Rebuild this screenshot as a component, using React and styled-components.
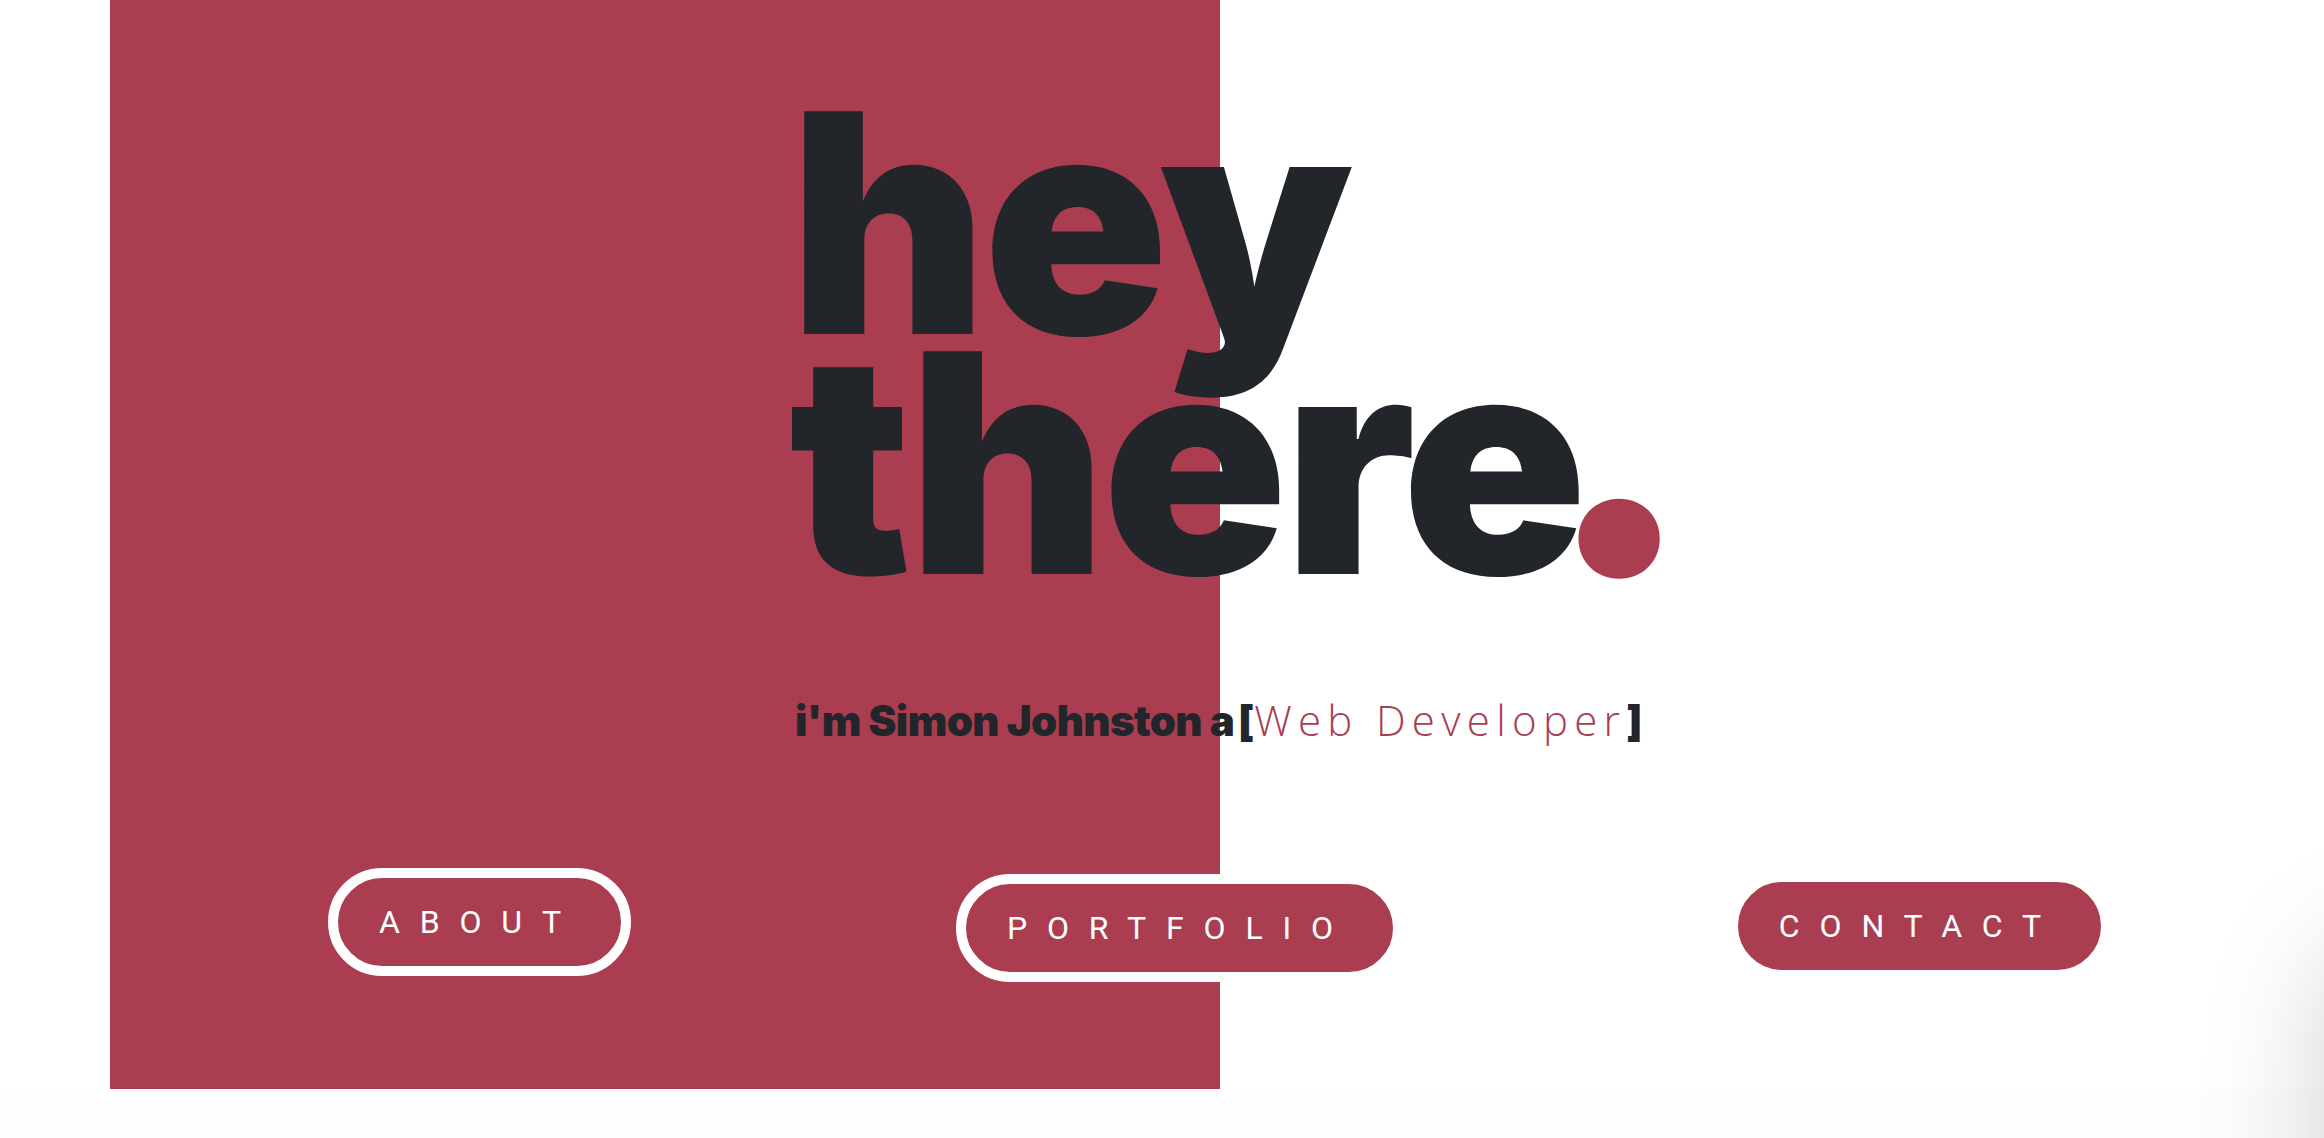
import React from "react";
import styled, { createGlobalStyle } from "styled-components";

const GlobalStyle = createGlobalStyle`
  html, body {
    margin: 0;
    padding: 0;
    background: #fdfdfd;
  }
  body {
    font-family: Inter, "Liberation Sans", sans-serif;
    overflow: hidden;
  }
`;

const RED = "#aa3e50";
const INK = "#222529";

const Hero = styled.section`
  display: grid;
  grid-template-areas: "stack";
  height: 1089px;
  background: #ffffff;
  overflow: hidden;
`;

const Panel = styled.div`
  grid-area: stack;
  margin-left: 110px;
  width: 1110px;
  background: ${RED};
`;

const Content = styled.div`
  grid-area: stack;
  display: flex;
  flex-direction: column;
  padding-top: 103px;
`;

const Headline = styled.h1`
  margin: 0 0 0 789px;
  font-family: Inter, "Liberation Sans", sans-serif;
  font-weight: 900;
  font-size: 306px;
  line-height: 240px;
  letter-spacing: -0.015em;
  color: ${INK};
`;

const Line = styled.span`
  display: block;
  white-space: nowrap;
`;

const Dot = styled.span`
  margin-left: -39px;
  font-size: 1.32em;
  line-height: 0;
  color: ${RED};
`;

const Intro = styled.p`
  display: flex;
  align-items: baseline;
  margin: 116px 0 0 795px;
  font-size: 42px;
  line-height: 42px;
  white-space: pre;
`;

const Name = styled.span`
  font-family: Inter, "Liberation Sans", sans-serif;
  font-weight: 900;
  letter-spacing: -0.015em;
  color: ${INK};
`;

const Bracket = styled.span`
  margin-left: ${(p) => p.$shift || 0}px;
  font-family: Inter, "Liberation Sans", sans-serif;
  font-weight: 900;
  color: ${INK};
`;

const Role = styled.span`
  font-family: "Open Sans", "Noto Sans", sans-serif;
  font-weight: 300;
  letter-spacing: 0.15em;
  color: ${RED};
`;

const Nav = styled.nav`
  display: flex;
  align-items: flex-start;
  gap: 325px;
  margin-top: 126px;
  padding-left: 328px;
`;

const NavButton = styled.a`
  display: flex;
  align-items: center;
  box-sizing: border-box;
  height: 108px;
  margin-top: ${(p) => p.$drop || 0}px;
  padding: 0 40px 0 41px;
  border: 10px solid #ffffff;
  border-radius: 54px;
  background: ${RED};
  color: #ffffff;
  font-family: Roboto, "Liberation Sans", sans-serif;
  font-weight: 400;
  font-size: 32px;
  line-height: 1;
  letter-spacing: 0.62em;
  text-decoration: none;
  white-space: nowrap;
  cursor: pointer;
`;

const ScrollShade = styled.div`
  position: fixed;
  left: 2330px;
  top: 950px;
  width: 200px;
  height: 340px;
  border-radius: 60px;
  background: #ffffff;
  box-shadow: 0 0 130px rgba(0, 0, 0, 0.2);
`;

export default function App() {
  return (
    <>
      <GlobalStyle />
      <Hero>
        <Panel />
        <Content>
          <Headline>
            <Line>hey</Line>
            <Line>
              there<Dot>.</Dot>
            </Line>
          </Headline>
          <Intro>
            <Name>i'm Simon Johnston a </Name>
            <Bracket $shift={-4}>[</Bracket>
            <Role>Web Developer</Role>
            <Bracket>]</Bracket>
          </Intro>
          <Nav>
            <NavButton $drop={0}>ABOUT</NavButton>
            <NavButton $drop={6}>PORTFOLIO</NavButton>
            <NavButton $drop={4}>CONTACT</NavButton>
          </Nav>
        </Content>
      </Hero>
      <ScrollShade />
    </>
  );
}
